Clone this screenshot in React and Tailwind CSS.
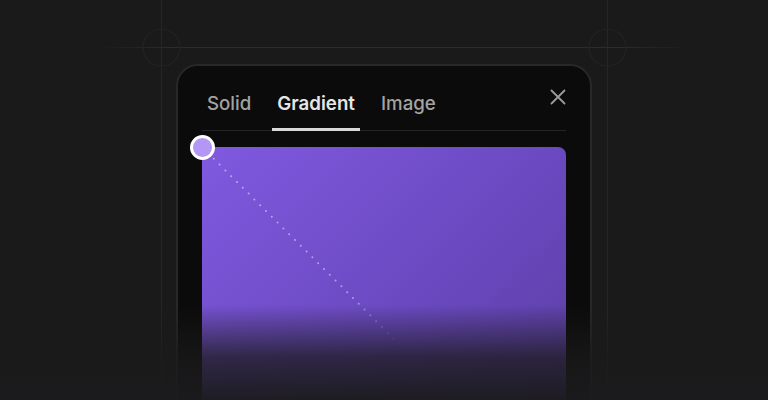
import React from "react";

export default function App() {
  return (
    <div
      className="relative h-[400px] w-full overflow-hidden bg-[#1a1a1a]"
      style={{ fontFamily: "Inter, 'Noto Sans', sans-serif" }}
    >
      {/* guide decorations */}
      <svg className="pointer-events-none absolute inset-0" width="768" height="400">
        <defs>
          <linearGradient id="hl" x1="0" x2="1" y1="0" y2="0">
            <stop offset="0" stopColor="#2c2c2c" stopOpacity="0" />
            <stop offset="0.12" stopColor="#2c2c2c" stopOpacity="1" />
            <stop offset="0.88" stopColor="#2c2c2c" stopOpacity="1" />
            <stop offset="1" stopColor="#2c2c2c" stopOpacity="0" />
          </linearGradient>
        </defs>
        <line x1="161.5" y1="0" x2="161.5" y2="400" stroke="#262626" strokeWidth="1" />
        <line x1="607.5" y1="0" x2="607.5" y2="400" stroke="#262626" strokeWidth="1" />
        <rect x="100" y="47" width="590" height="1" fill="url(#hl)" />
        <circle cx="161.5" cy="47.5" r="18.5" fill="none" stroke="#232323" strokeWidth="1.2" />
        <circle cx="607.5" cy="47.5" r="18.5" fill="none" stroke="#232323" strokeWidth="1.2" />
      </svg>

      <div className="relative flex justify-center pt-[64px]">
        <div className="w-[416px] h-[400px] rounded-[22px] border-2 border-[#282828] bg-[#0b0b0b] px-[24px] pt-[26px]">
          {/* header */}
          <div className="flex items-start justify-between border-b border-[#252525]">
            <div className="flex gap-4 text-[18.7px] leading-[24px]">
              <div className="-mb-px border-b-[3px] border-transparent px-[5px] pb-[12px] font-medium text-[#a3a3a3]">
                Solid
              </div>
              <div className="-mb-px border-b-[3px] border-[#d9d9d9] px-[5px] pb-[12px] font-semibold text-[#e6e6e6]">
                Gradient
              </div>
              <div className="-mb-px border-b-[3px] border-transparent px-[5px] pb-[12px] font-medium text-[#a3a3a3]">
                Image
              </div>
            </div>
            <svg className="-mt-[3px]" width="16" height="16" viewBox="0 0 16 16">
              <path d="M1.5 1.5 L14.5 14.5 M14.5 1.5 L1.5 14.5" stroke="#9c9c9c" strokeWidth="1.8" strokeLinecap="round" />
            </svg>
          </div>

          {/* gradient preview */}
          <div className="relative mt-[16px] h-[300px] rounded-[8px] bg-[linear-gradient(135deg,#8059df_0%,#6a49c0_55%,#5a3d9f_100%)]">
            <svg className="absolute left-0 top-0" width="364" height="300">
              <defs>
                <linearGradient id="dl" x1="0" y1="0" x2="1" y2="1">
                  <stop offset="0" stopColor="#ffffff" stopOpacity="0.5" />
                  <stop offset="0.75" stopColor="#ffffff" stopOpacity="0.45" />
                  <stop offset="1" stopColor="#ffffff" stopOpacity="0" />
                </linearGradient>
              </defs>
              <line
                x1="6"
                y1="6"
                x2="205"
                y2="205"
                stroke="url(#dl)"
                strokeWidth="2"
                strokeLinecap="round"
                strokeDasharray="0 8.2"
              />
            </svg>
            <div className="absolute -left-[12px] -top-[12px] h-[25px] w-[25px] rounded-full border-[3px] border-white bg-[#b496f4]" />
          </div>
        </div>
      </div>

      {/* bottom fade */}
      <div className="pointer-events-none absolute bottom-0 left-0 h-[95px] w-full bg-[linear-gradient(to_bottom,rgba(26,26,26,0)_0%,rgba(26,26,27,0.75)_55%,rgba(27,27,29,0.97)_100%)]" />
    </div>
  );
}
